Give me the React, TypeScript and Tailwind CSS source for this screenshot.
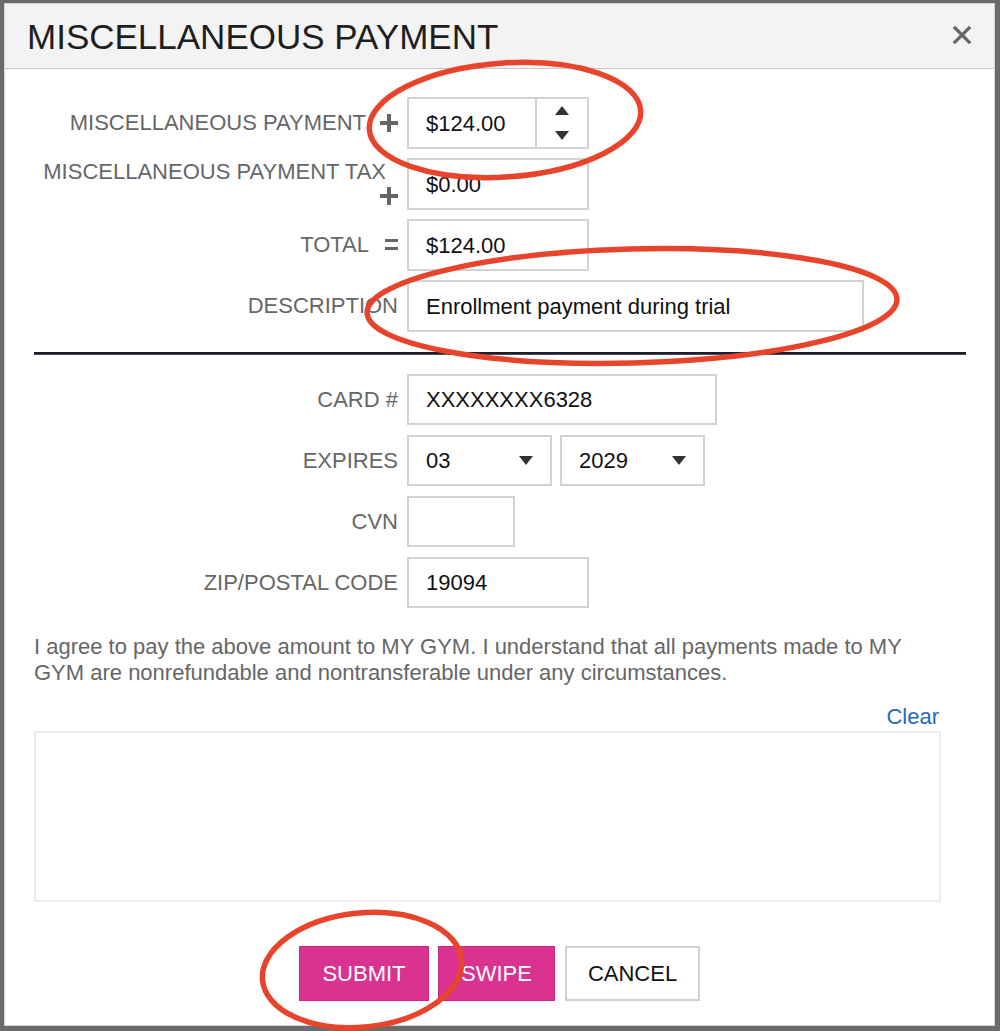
import React from "react";

const Plus = () => (
  <svg width="18" height="18" viewBox="0 0 18 18" className="shrink-0">
    <rect x="0" y="7" width="18" height="4" fill="#666" />
    <rect x="7" y="0" width="4" height="18" fill="#666" />
  </svg>
);

const Equals = () => (
  <svg width="13" height="12" viewBox="0 0 13 12" className="shrink-0">
    <rect x="0" y="0" width="13" height="3" fill="#666" />
    <rect x="0" y="8" width="13" height="3" fill="#666" />
  </svg>
);

const TriDown = () => (
  <svg width="14" height="9" viewBox="0 0 14 9">
    <polygon points="0,0 14,0 7,9" fill="#333" />
  </svg>
);

const TriUp = () => (
  <svg width="14" height="9" viewBox="0 0 14 9">
    <polygon points="0,9 14,9 7,0" fill="#333" />
  </svg>
);

const Label = ({ children }: { children: React.ReactNode }) => (
  <div className="flex items-center justify-end text-[22px] text-[#666] leading-[24px]">{children}</div>
);

const Box = ({ w, children, className = "" }: { w: string; children?: React.ReactNode; className?: string }) => (
  <div className={`${w} h-full border-2 border-[#d2d2d2] bg-white flex items-center pl-[17px] text-[22px] text-[#111] ${className}`}>
    {children}
  </div>
);

export default function App() {
  return (
    <div className="relative w-[1000px] h-[1031px] bg-[#6b6b6b] overflow-hidden pt-[3px] pl-[4px] font-['Liberation_Sans',Arial,sans-serif]">
      <div className="w-[991px] h-[1023px] border border-[#d4d4d4] bg-white flex flex-col">
        {/* Header */}
        <div className="h-[65px] shrink-0 bg-[#f3f3f3] border-b border-[#c9c9c9] flex items-center justify-between pl-[22px] pr-[23px]">
          <div className="text-[35px] text-[#1e1e1e] leading-none pt-[1px]">MISCELLANEOUS PAYMENT</div>
          <svg width="18" height="18" viewBox="0 0 18 18" className="mb-[2px]">
            <line x1="2" y1="2" x2="16" y2="16" stroke="#666" strokeWidth="3.2" strokeLinecap="square" />
            <line x1="16" y1="2" x2="2" y2="16" stroke="#666" strokeWidth="3.2" strokeLinecap="square" />
          </svg>
        </div>

        {/* Body */}
        <div className="flex flex-col pl-[29px] pr-[27px] pt-[28px]">
          <div className="grid grid-cols-[364px_1fr] gap-x-[9px] gap-y-[9px] auto-rows-[52px]">
            <Label>
              <span>MISCELLANEOUS PAYMENT</span>
              <span className="ml-[14px] flex"><Plus /></span>
            </Label>
            <div className="h-full">
              <div className="w-[182px] h-full border-2 border-[#d2d2d2] flex">
                <div className="flex-1 flex items-center pl-[17px] text-[22px] text-[#111]">$124.00</div>
                <div className="w-[52px] border-l-2 border-[#d2d2d2] flex flex-col items-center justify-center gap-[16px]">
                  <TriUp />
                  <TriDown />
                </div>
              </div>
            </div>

            <div className="flex flex-col items-end justify-center text-[22px] text-[#666] leading-[24px]">
              <span className="mr-[12px]">MISCELLANEOUS PAYMENT TAX</span>
              <span className="h-[24px] flex items-center"><Plus /></span>
            </div>
            <Box w="w-[182px]">$0.00</Box>

            <Label>
              <span>TOTAL</span>
              <span className="ml-[16px] flex"><Equals /></span>
            </Label>
            <Box w="w-[182px]">$124.00</Box>

            <Label>DESCRIPTION</Label>
            <Box w="w-[457px]">Enrollment payment during trial</Box>
          </div>

          <div className="mt-[20px] w-[932px] border-t-2 border-b border-t-[#1c1c2a] border-b-[#4a4a5e]" />

          <div className="mt-[19px] grid grid-cols-[364px_1fr] gap-x-[9px] gap-y-[10px] auto-rows-[51px]">
            <Label>CARD #</Label>
            <Box w="w-[310px]">XXXXXXXX6328</Box>

            <Label>EXPIRES</Label>
            <div className="flex gap-[8px] h-full">
              <Box w="w-[145px]" className="justify-between pr-[17px]">
                <span>03</span>
                <TriDown />
              </Box>
              <Box w="w-[145px]" className="justify-between pr-[17px]">
                <span>2029</span>
                <TriDown />
              </Box>
            </div>

            <Label>CVN</Label>
            <Box w="w-[108px]" />

            <Label>ZIP/POSTAL CODE</Label>
            <Box w="w-[182px]">19094</Box>
          </div>

          <p className="mt-[26px] w-[895px] text-[22px] leading-[26px] text-[#666]">
            I agree to pay the above amount to MY GYM. I understand that all payments made to MY GYM are nonrefundable and nontransferable under any circumstances.
          </p>

          <div className="mt-[18px] w-[907px] flex justify-end pr-[2px] text-[22px] leading-[26px] text-[#1f6cb8]">Clear</div>
          <div className="mt-[1px] w-[907px] h-[171px] border-2 border-[#ececec]" />

          <div className="mt-[44px] flex justify-center gap-[9px] pr-[2px]">
            <button className="w-[130px] h-[55px] bg-[#d93291] border border-[#c92985] text-white text-[22px]">SUBMIT</button>
            <button className="w-[117px] h-[55px] bg-[#d93291] border border-[#c92985] text-white text-[22px]">SWIPE</button>
            <button className="w-[135px] h-[55px] ml-[1px] bg-white border-2 border-[#d0d0d0] text-[#111] text-[22px]">CANCEL</button>
          </div>
        </div>
      </div>

      {/* Red annotation ellipses */}
      <svg className="absolute inset-0 pointer-events-none" width="1000" height="1031" viewBox="0 0 1000 1031">
        <ellipse cx="505" cy="120" rx="136" ry="57" transform="rotate(-4 505 120)" fill="none" stroke="#e8442b" strokeWidth="5.5" />
        <ellipse cx="632" cy="306" rx="265" ry="57" transform="rotate(-1.5 632 306)" fill="none" stroke="#e8442b" strokeWidth="5.5" />
        <ellipse cx="362" cy="970" rx="100" ry="57" transform="rotate(-6 362 970)" fill="none" stroke="#e8442b" strokeWidth="5.5" />
      </svg>
    </div>
  );
}
